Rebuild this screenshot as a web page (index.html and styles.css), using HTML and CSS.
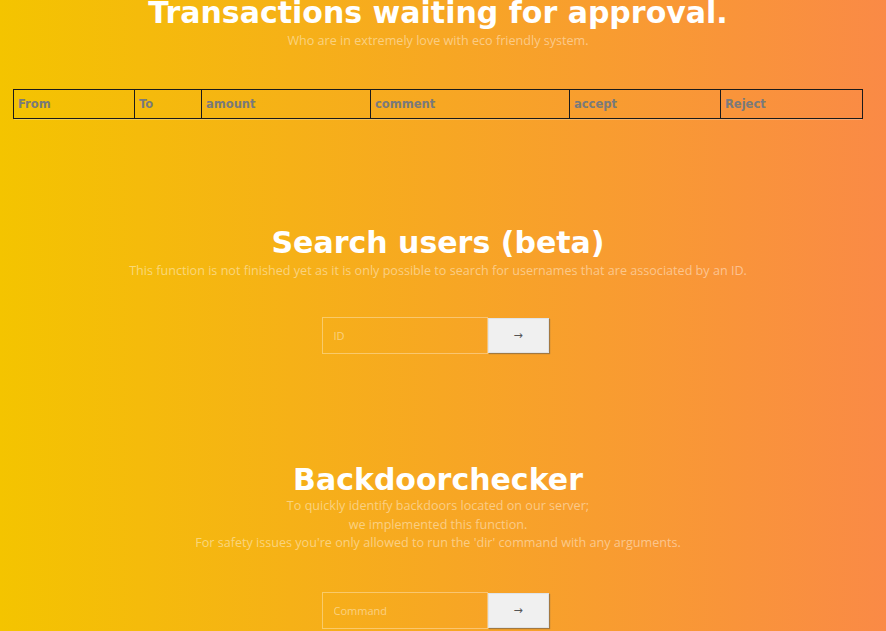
FILE: index.html
```html
<!DOCTYPE html>
<html>
<head>
<meta charset="utf-8">
<link rel="stylesheet" href="styles.css">
</head>
<body>
<section class="section transactions">
  <h1 class="title">Transactions waiting for approval.</h1>
  <p class="lead">Who are in extremely love with eco friendly system.</p>
  <table class="tx-table">
    <thead>
      <tr>
        <th class="c-from">From</th>
        <th class="c-to">To</th>
        <th class="c-amount">amount</th>
        <th class="c-comment">comment</th>
        <th class="c-accept">accept</th>
        <th class="c-reject">Reject</th>
      </tr>
    </thead>
  </table>
</section>

<section class="section search">
  <h1 class="title">Search users (beta)</h1>
  <p class="lead">This function is not finished yet as it is only possible to search for usernames that are associated by an ID.</p>
  <form class="inline-form">
    <input class="field" type="text" placeholder="ID">
    <button class="go" type="button">&#8594;</button>
  </form>
</section>

<section class="section backdoor">
  <h1 class="title">Backdoorchecker</h1>
  <p class="lead">To quickly identify backdoors located on our server;<br>we implemented this function.<br>For safety issues you're only allowed to run the 'dir' command with any arguments.</p>
  <form class="inline-form">
    <input class="field" type="text" placeholder="Command">
    <button class="go" type="button">&#8594;</button>
  </form>
</section>
</body>
</html>
```

FILE: styles.css
```css
html, body {
  margin: 0;
  padding: 0;
}
body {
  box-sizing: border-box;
  padding-right: 10px;
  background: linear-gradient(to right, #f4c400 0%, #f7a723 50%, #fa8a46 100%);
  min-height: 100vh;
  font-family: "DejaVu Sans", sans-serif;
  color: #fff;
}
.section {
  display: flex;
  flex-direction: column;
  align-items: center;
  text-align: center;
}
.title {
  margin: 0;
  font-family: "DejaVu Sans", sans-serif;
  font-weight: bold;
  font-size: 30px;
  line-height: 36px;
  color: #fff;
}
.lead {
  margin: 0;
  font-family: "Open Sans", sans-serif;
  font-size: 12.6px;
  line-height: 19px;
  color: rgba(255, 255, 255, 0.45);
}
.transactions {
  margin-top: -5px;
}
.tx-table {
  margin-top: 39px;
  width: 850px;
  table-layout: fixed;
  border-collapse: collapse;
  border: 1px solid #1a1a1a;
  box-shadow: 0 2px 0 -1px rgba(255, 255, 255, 0.25);
}
.tx-table th {
  border: 1px solid #1a1a1a;
  text-align: left;
  padding: 0 4px;
  height: 28px;
  font-family: "DejaVu Sans", sans-serif;
  font-weight: bold;
  font-size: 11.5px;
  color: #7a7a7a;
}
.c-from { width: 112px; }
.c-to { width: 58px; }
.c-amount { width: 160px; }
.c-comment { width: 190px; }
.c-accept { width: 142px; }
.search {
  margin-top: 106px;
}
.backdoor {
  margin-top: 108px;
}
.backdoor .lead {
  margin-top: -1px;
  line-height: 18.5px;
}
.inline-form {
  display: flex;
  align-items: center;
  margin: 37px 6px 0 0;
}
.backdoor .inline-form {
  margin-top: 39px;
}
.field {
  box-sizing: border-box;
  width: 166px;
  height: 37px;
  margin: 0;
  padding: 0 11px;
  background: transparent;
  border: 1px solid rgba(255, 255, 255, 0.35);
  font-family: "Open Sans", sans-serif;
  font-size: 11px;
  color: #fff;
  outline: none;
}
.field::placeholder {
  color: rgba(255, 255, 255, 0.45);
}
.go {
  box-sizing: border-box;
  width: 61px;
  height: 35px;
  margin: 0;
  padding: 0;
  border: 1px solid #dfe3e8;
  background: #f0f0f0;
  box-shadow: 1px 1px 1px rgba(60, 70, 90, 0.45);
  font-family: "DejaVu Sans", sans-serif;
  font-size: 11px;
  color: #555;
}
```
